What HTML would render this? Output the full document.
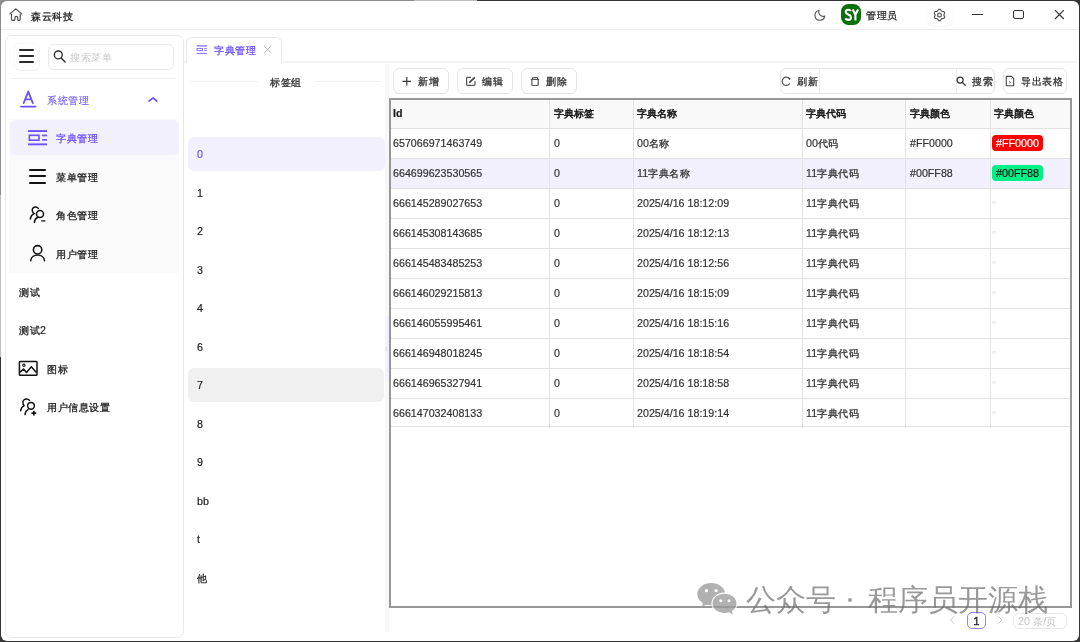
<!DOCTYPE html><html><head><meta charset="utf-8"><style>
*{box-sizing:border-box;margin:0;padding:0}
html,body{width:1080px;height:642px;overflow:hidden}
body{position:relative;background:#3a3a3a;font-family:"Liberation Sans",sans-serif;font-size:10.5px;color:#333}
.frame{position:absolute;left:0;top:0;width:1080px;height:642px;background:#363636}
.win{position:absolute;left:1px;top:1px;width:1078px;height:640px;background:#fff;border-radius:6px;overflow:hidden}
.a{position:absolute}
.t{position:absolute;white-space:nowrap;line-height:14px;height:14px;will-change:transform;-webkit-text-stroke:0.2px currentColor}
svg{position:absolute;overflow:visible}
.bd{position:absolute;border:1px solid #e6e6e6;border-radius:5px;background:#fff}
</style></head><body>
<div class="frame"></div>
<div class="a" style="left:0px;top:0px;width:414px;height:8px;background:#8c8c8c"></div>
<div class="a" style="left:414px;top:0px;width:63px;height:8px;background:#bdbdbd"></div>
<div class="a" style="left:0px;top:0px;width:8px;height:195px;background:#8c8c8c"></div>
<div class="a" style="left:0px;top:195px;width:8px;height:162px;background:#bdbdbd"></div>
<div class="win">
<svg style="left:-1px;top:-1px" width="40" height="30" viewBox="0 0 40 30"><g fill="none" stroke="#4a4a4a" stroke-width="1.15" stroke-linecap="round" stroke-linejoin="round"><path d="M9.8 13.9 L15.8 8.9 L21.8 13.9"/><path d="M11.5 14 V19.3 Q11.5 20.4 12.6 20.4 H13.9 Q14.9 20.4 14.9 19.4 V17.7 Q14.9 16.3 16.3 16.3 Q17.7 16.3 17.7 17.7 V19.4 Q17.7 20.4 18.7 20.4 H19.2 Q20.2 20.4 20.2 19.3 V14"/></g></svg>
<div class="t" style="left:30px;top:8px;font-size:10.7px;color:#222;"><span style="font-size:10.3px;letter-spacing:0.5px;-webkit-text-stroke-width:0.3px">森云科技</span></div>
<div class="a" style="left:0px;top:28px;width:1077px;height:1px;background:#eeeeee"></div>
<svg style="left:-1px;top:-1px" width="900" height="30" viewBox="0 0 900 30"><path d="M818.92 10.50 A4.9 4.9 0 1 0 824.73 16.13 A4.5 4.5 0 0 1 818.92 10.50 Z" fill="none" stroke="#555" stroke-width="1.15" stroke-linejoin="round"/></svg>
<div class="a" style="left:840px;top:3.3px;width:20.200000000000045px;height:20.4px;background:#0a6e0a;border-radius:7.5px"></div>
<svg style="left:-1px;top:-1px" width="900" height="30" viewBox="0 0 900 30"><g fill="none" stroke="#fff" stroke-width="2.1"><path d="M850.9 11 C850.3 10.1 849.4 9.7 848.3 9.7 C846.7 9.7 845.8 10.6 845.8 11.9 C845.8 13.3 846.9 13.9 848.3 14.5 C849.9 15.1 851 15.8 851 17.4 C851 19 849.8 19.9 848.2 19.9 C846.9 19.9 846 19.4 845.3 18.5"/><path d="M852.7 9.4 L855.4 14.6 L858.1 9.4 M855.4 14.4 V20.6"/></g></svg>
<div class="t" style="left:865px;top:7px;font-size:10.7px;color:#333;"><span style="font-size:10.3px;letter-spacing:0.5px;-webkit-text-stroke-width:0.3px">管理员</span></div>
<div class="a" style="left:925px;top:2px;width:28px;height:24px;border:1px solid #fcfcfc;border-bottom-color:#f2f2f2;border-radius:8px"></div>
<svg style="left:-1px;top:-1px" width="1000" height="30" viewBox="0 0 1000 30"><g fill="none" stroke="#555" stroke-width="1.2" stroke-linejoin="round"><path d="M938.62 9.47 L940.38 9.47 L941.65 11.28 L943.85 11.48 L944.73 12.99 L943.80 15.00 L944.73 17.01 L943.85 18.52 L941.65 18.72 L940.38 20.53 L938.62 20.53 L937.35 18.72 L935.15 18.52 L934.27 17.01 L935.20 15.00 L934.27 12.99 L935.15 11.48 L937.35 11.28 Z"/><circle cx="939.5" cy="15" r="1.9"/></g></svg>
<div class="a" style="left:971px;top:12.7px;width:11px;height:1.5px;background:#333"></div>
<div class="a" style="left:1012px;top:9px;width:11px;height:9px;border:1.3px solid #333;border-radius:2px"></div>
<svg style="left:1049px;top:4px" width="20" height="20" viewBox="0 0 20 20"><path d="M5 5.2 L13.8 14 M13.8 5.2 L5 14" stroke="#333" stroke-width="1.2"/></svg>
<div class="a" style="left:4px;top:34px;width:179px;height:603px;border:1px solid #e8e8e8;border-radius:7px;background:#fff"></div>
<div class="a" style="left:13px;top:42px;width:26px;height:28px;border:1px solid #f8f8f8;border-bottom-color:#f0f0f0;border-radius:6px"></div>
<div class="a" style="left:18px;top:48.3px;width:15px;height:1.4000000000000057px;background:#2a2a2a;border-radius:1px"></div>
<div class="a" style="left:18px;top:54.3px;width:15px;height:1.4000000000000057px;background:#2a2a2a;border-radius:1px"></div>
<div class="a" style="left:18px;top:60.3px;width:15px;height:1.4000000000000057px;background:#2a2a2a;border-radius:1px"></div>
<div class="a" style="left:47px;top:43px;width:126px;height:26px;border:1px solid #e8e8e8;border-radius:6px"></div>
<svg style="left:49px;top:46px" width="20" height="18" viewBox="0 0 20 18"><circle cx="8.3" cy="7.9" r="3.95" fill="none" stroke="#333" stroke-width="1.4"/><path d="M11.2 10.9 L15.1 14.9" stroke="#333" stroke-width="1.5" stroke-linecap="round"/></svg>
<div class="t" style="left:69px;top:49px;font-size:10.7px;color:#c8c8c8;-webkit-text-stroke:0"><span style="font-size:10.3px;letter-spacing:0.5px">搜索菜单</span></div>
<div class="a" style="left:11px;top:77px;width:164px;height:1px;background:#f0f0f0"></div>
<svg style="left:17px;top:87px" width="22" height="22" viewBox="0 0 22 22"><path d="M5.7 15 L10.25 3.6 L14.8 15 M7.6 11.4 H12.9" fill="none" stroke="#6f51ff" stroke-width="1.9" stroke-linecap="round" stroke-linejoin="round"/><path d="M3 18.6 H17.6" stroke="#6f51ff" stroke-width="1.8" stroke-linecap="round"/></svg>
<div class="t" style="left:46px;top:92px;font-size:10.7px;color:#7256ff;-webkit-text-stroke:0.1px"><span style="font-size:10.3px;letter-spacing:0.5px">系统管理</span></div>
<svg style="left:145px;top:91px" width="14" height="12" viewBox="0 0 14 12"><path d="M3.1 9 L7 5.8 L10.8 9" fill="none" stroke="#6f51ff" stroke-width="1.7" stroke-linecap="round" stroke-linejoin="round"/></svg>
<div class="a" style="left:8px;top:118px;width:170px;height:153.5px;background:#fafafa;border-radius:2px"></div>
<div class="a" style="left:9px;top:119px;width:169px;height:35px;background:#f3f0fe;border-radius:6px"></div>
<svg style="left:25px;top:127px" width="24" height="20" viewBox="0 0 24 20"><g fill="#6f51ff"><rect x="2" y="2.1" width="19" height="1.9"/><rect x="2" y="15.4" width="19" height="1.9"/><rect x="16.1" y="6.6" width="4.9" height="1.7"/><rect x="16.1" y="11" width="4.9" height="1.7"/></g><rect x="3.4" y="7.3" width="9.6" height="4.9" fill="none" stroke="#6f51ff" stroke-width="1.6"/></svg>
<div class="t" style="left:55px;top:130px;font-size:10.7px;color:#6f51ff;"><span style="font-size:10.3px;letter-spacing:0.5px;-webkit-text-stroke-width:0.3px">字典管理</span></div>
<div class="a" style="left:28px;top:168px;width:17px;height:2px;background:#111;border-radius:1px"></div>
<div class="a" style="left:28px;top:174.3px;width:17px;height:2.0px;background:#111;border-radius:1px"></div>
<div class="a" style="left:28px;top:180.8px;width:17px;height:2.0px;background:#111;border-radius:1px"></div>
<div class="t" style="left:55px;top:169px;font-size:10.7px;color:#222;"><span style="font-size:10.3px;letter-spacing:0.5px;-webkit-text-stroke-width:0.3px">菜单管理</span></div>
<svg style="left:25px;top:201px" width="24" height="24" viewBox="0 0 24 24"><g fill="none" stroke="#111" stroke-width="1.5" stroke-linecap="round"><path d="M12.3 6.4 C11.6 5.3 10.5 4.9 9.4 4.9 C7.4 4.9 6.2 6.5 6.2 8.3 C6.2 9.6 6.9 10.8 8.1 11.6 C5.8 12.6 4.6 14.6 4.3 17"/><circle cx="14" cy="12" r="3.5"/><path d="M11.6 15.5 C9.6 16.3 8.6 18.2 8.4 20.4"/><path d="M15.2 18.9 H19.4" stroke-width="1.4" stroke-linecap="butt"/></g></svg>
<div class="t" style="left:55px;top:207px;font-size:10.7px;color:#222;"><span style="font-size:10.3px;letter-spacing:0.5px;-webkit-text-stroke-width:0.3px">角色管理</span></div>
<svg style="left:25px;top:240px" width="24" height="24" viewBox="0 0 24 24"><g fill="none" stroke="#111" stroke-width="1.55" stroke-linecap="round"><circle cx="11.6" cy="8.8" r="4.2"/><path d="M4.7 19.8 C5 16.3 8 14 11.6 14 C15.2 14 18.2 16.3 18.5 19.8"/></g></svg>
<div class="t" style="left:55px;top:246px;font-size:10.7px;color:#222;"><span style="font-size:10.3px;letter-spacing:0.5px;-webkit-text-stroke-width:0.3px">用户管理</span></div>
<div class="t" style="left:18px;top:284px;font-size:10.7px;color:#222;"><span style="font-size:10.3px;letter-spacing:0.5px;-webkit-text-stroke-width:0.3px">测试</span></div>
<div class="t" style="left:18px;top:322px;font-size:10.7px;color:#222;"><span style="font-size:10.3px;letter-spacing:0.5px;-webkit-text-stroke-width:0.3px">测试</span>2</div>
<svg style="left:15px;top:355px" width="24" height="24" viewBox="0 0 24 24"><g fill="none" stroke="#111" stroke-width="1.5" stroke-linejoin="round"><rect x="3.4" y="5.4" width="17.6" height="13.9" rx="0.9"/><path d="M4.1 16.1 L7.5 13.1 L10.5 16.4 L15.3 10.8 L20.4 16.4"/><circle cx="7.9" cy="9.3" r="1.15" stroke-width="1.1"/></g></svg>
<div class="t" style="left:46px;top:361px;font-size:10.7px;color:#222;"><span style="font-size:10.3px;letter-spacing:0.5px;-webkit-text-stroke-width:0.3px">图标</span></div>
<svg style="left:15px;top:394px" width="24" height="24" viewBox="0 0 24 24"><g fill="none" stroke="#111" stroke-width="1.5" stroke-linecap="round"><path d="M13.5 5.4 C12.8 4.5 11.7 4.1 10.5 4.1 C8.5 4.1 6.9 5.6 6.9 7.5 C6.9 8.8 7.3 9.9 8.1 10.7 C6 11.8 5 13.6 4.7 15.7"/><circle cx="15" cy="10.8" r="3.4"/><path d="M12 14.6 C10.3 15.4 9.2 17.3 9 19.6"/><path d="M15.5 18.1 H20.3 M17.9 15.7 V20.5" stroke-width="1.7" stroke-linecap="butt"/></g></svg>
<div class="t" style="left:46px;top:399px;font-size:10.7px;color:#222;"><span style="font-size:10.3px;letter-spacing:0.5px;-webkit-text-stroke-width:0.3px">用户信息设置</span></div>
<div class="a" style="left:183px;top:60px;width:893px;height:2px;background:#f2f2f2"></div>
<div class="a" style="left:185px;top:36px;width:96px;height:26px;border:1px solid #e8e8e8;border-bottom:none;border-radius:6px 6px 0 0;background:#fff"></div>
<svg style="left:191px;top:41px" width="20" height="16" viewBox="0 0 20 16"><g fill="#7a62ff" opacity="0.85"><rect x="4.7" y="3.2" width="10.2" height="1.4"/><rect x="4.7" y="10.9" width="10.2" height="1.2"/><rect x="12.2" y="6" width="2.7" height="1.1"/><rect x="12.2" y="8" width="2.7" height="1.1"/></g><rect x="5.1" y="6.5" width="5.4" height="2.1" fill="none" stroke="#7a62ff" stroke-width="1.05" opacity="0.85"/></svg>
<div class="t" style="left:213px;top:42px;font-size:10.7px;color:#6f51ff;"><span style="font-size:10.3px;letter-spacing:0.5px;-webkit-text-stroke-width:0.3px">字典管理</span></div>
<svg style="left:255px;top:39px" width="24" height="20" viewBox="0 0 24 20"><path d="M8.4 6.2 L14.9 12.7 M14.9 6.2 L8.4 12.7" stroke="#b4b4b4" stroke-width="1"/></svg>
<div class="a" style="left:190px;top:80px;width:67px;height:1px;background:#eeeeee"></div>
<div class="a" style="left:313px;top:80px;width:68px;height:1px;background:#eeeeee"></div>
<div class="t" style="left:269px;top:74px;font-size:10.7px;color:#333;"><span style="font-size:10.3px;letter-spacing:0.5px;-webkit-text-stroke-width:0.3px">标签组</span></div>
<div class="a" style="left:187px;top:136px;width:197px;height:34px;background:#f3f0fe;border-radius:6px"></div>
<div class="a" style="left:187px;top:367px;width:196px;height:34px;background:#f0f0f0;border-radius:6px"></div>
<div class="t" style="left:196px;top:146px;font-size:10.7px;color:#6f51ff;">0</div>
<div class="t" style="left:196px;top:185px;font-size:10.7px;color:#222;">1</div>
<div class="t" style="left:196px;top:223px;font-size:10.7px;color:#222;">2</div>
<div class="t" style="left:196px;top:262px;font-size:10.7px;color:#222;">3</div>
<div class="t" style="left:196px;top:300px;font-size:10.7px;color:#222;">4</div>
<div class="t" style="left:196px;top:339px;font-size:10.7px;color:#222;">6</div>
<div class="t" style="left:196px;top:377px;font-size:10.7px;color:#222;">7</div>
<div class="t" style="left:196px;top:416px;font-size:10.7px;color:#222;">8</div>
<div class="t" style="left:196px;top:454px;font-size:10.7px;color:#222;">9</div>
<div class="t" style="left:196px;top:493px;font-size:10.7px;color:#222;">bb</div>
<div class="t" style="left:196px;top:531px;font-size:10.7px;color:#222;">t</div>
<div class="t" style="left:196px;top:570px;font-size:10.7px;color:#222;"><span style="font-size:10.3px;letter-spacing:0.5px;-webkit-text-stroke-width:0.3px">他</span></div>
<div class="a" style="left:384px;top:63px;width:4px;height:568px;background:#f7f7f7"></div>
<div class="a" style="left:383.5px;top:315px;width:4.5px;height:65px;background:#f4f1ff"></div>
<svg style="left:379px;top:339px" width="12" height="14" viewBox="0 0 12 14"><path d="M7.4 6.6 L5.6 8.8 L7.4 11" fill="none" stroke="#d6ccff" stroke-width="1"/></svg>
<div class="a" style="left:392px;top:67px;width:56px;height:26px;border:1px solid #e4e4e4;border-radius:6px;background:#fff"></div>
<svg style="left:396px;top:71px" width="20" height="18" viewBox="0 0 20 18"><path d="M9.8 5 V13.5 M5.5 9.3 H13.9" stroke="#333" stroke-width="1.15"/></svg>
<div class="t" style="left:417px;top:73px;font-size:10.7px;color:#333;"><span style="font-size:10.3px;letter-spacing:0.5px;-webkit-text-stroke-width:0.3px">新增</span></div>
<div class="a" style="left:456px;top:67px;width:56px;height:26px;border:1px solid #e4e4e4;border-radius:6px;background:#fff"></div>
<svg style="left:459px;top:71px" width="20" height="18" viewBox="0 0 20 18"><g fill="none" stroke="#555" stroke-width="1.2" stroke-linecap="round" stroke-linejoin="round"><path d="M10.5 5.3 H7.4 Q6.6 5.3 6.6 6.1 V12.5 Q6.6 13.3 7.4 13.3 H14.2 Q15 13.3 15 12.5 V9.4"/></g><path d="M9.8 10.2 L14.3 5.8" stroke="#444" stroke-width="1.8" stroke-linecap="round"/></svg>
<div class="t" style="left:481px;top:73px;font-size:10.7px;color:#333;"><span style="font-size:10.3px;letter-spacing:0.5px;-webkit-text-stroke-width:0.3px">编辑</span></div>
<div class="a" style="left:520px;top:67px;width:56px;height:26px;border:1px solid #e4e4e4;border-radius:6px;background:#fff"></div>
<svg style="left:524px;top:71px" width="20" height="18" viewBox="0 0 20 18"><g fill="none" stroke="#555" stroke-width="1.2" stroke-linejoin="round" stroke-linecap="round"><path d="M6.2 7.5 H13.8 M7.2 7.3 L7.9 5.6 H12.1 L12.8 7.3"/><path d="M6.9 7.6 V12.6 Q6.9 13.5 7.8 13.5 H12.3 Q13.2 13.5 13.2 12.6 V7.6"/></g></svg>
<div class="t" style="left:545px;top:73px;font-size:10.7px;color:#333;"><span style="font-size:10.3px;letter-spacing:0.5px;-webkit-text-stroke-width:0.3px">删除</span></div>
<div class="a" style="left:779px;top:67px;width:215px;height:26px;border:1px solid #e4e4e4;border-radius:6px;background:#fff"></div>
<div class="a" style="left:818px;top:68px;width:1px;height:24px;background:#ececec"></div>
<div class="a" style="left:955px;top:68px;width:1px;height:24px;background:#ececec"></div>
<svg style="left:777px;top:71px" width="20" height="18" viewBox="0 0 20 18"><path d="M11.53 6.78 A4.1 4.1 0 1 0 11.62 11.71" fill="none" stroke="#555" stroke-width="1.2" stroke-linecap="round"/><circle cx="11.53" cy="6.78" r="0.95" fill="#444"/></svg>
<div class="t" style="left:796px;top:73px;font-size:10.7px;color:#333;"><span style="font-size:10.3px;letter-spacing:0.5px;-webkit-text-stroke-width:0.3px">刷新</span></div>
<svg style="left:951px;top:71px" width="20" height="18" viewBox="0 0 20 18"><circle cx="8.1" cy="8.1" r="3.05" fill="none" stroke="#333" stroke-width="1.2"/><path d="M10.4 10.5 L13.3 13.3" stroke="#444" stroke-width="1.3" stroke-linecap="round"/></svg>
<div class="t" style="left:971px;top:73px;font-size:10.7px;color:#333;"><span style="font-size:10.3px;letter-spacing:0.5px;-webkit-text-stroke-width:0.3px">搜索</span></div>
<div class="a" style="left:1002px;top:67px;width:64px;height:26px;border:1px solid #e4e4e4;border-radius:6px;background:#fff"></div>
<svg style="left:1000px;top:71px" width="20" height="18" viewBox="0 0 20 18"><g fill="none" stroke="#444" stroke-width="1.1" stroke-linejoin="round"><path d="M5.3 4.4 H10.5 L12.7 6.7 V13.7 H5.3 Z"/></g><path d="M8.3 9.2 L9.4 10.2 L8.4 11.3" fill="none" stroke="#555" stroke-width="1"/><circle cx="10.3" cy="6.6" r="0.6" fill="#999"/></svg>
<div class="t" style="left:1020px;top:73px;font-size:10.7px;color:#333;"><span style="font-size:10.3px;letter-spacing:0.5px;-webkit-text-stroke-width:0.3px">导出表格</span></div>
<div class="a" style="left:388px;top:97px;width:683px;height:510px;border:2px solid #979797;background:#fff"></div>
<div class="a" style="left:390px;top:99px;width:679px;height:28px;background:#f9f9f9"></div>
<div class="a" style="left:390px;top:158px;width:679px;height:29px;background:#f3f0fe"></div>
<div class="a" style="left:390px;top:127px;width:679px;height:1px;background:#e2e2e2"></div>
<div class="a" style="left:390px;top:157px;width:679px;height:1px;background:#e2e2e2"></div>
<div class="a" style="left:390px;top:187px;width:679px;height:1px;background:#e2e2e2"></div>
<div class="a" style="left:390px;top:217px;width:679px;height:1px;background:#e2e2e2"></div>
<div class="a" style="left:390px;top:247px;width:679px;height:1px;background:#e2e2e2"></div>
<div class="a" style="left:390px;top:277px;width:679px;height:1px;background:#e2e2e2"></div>
<div class="a" style="left:390px;top:307px;width:679px;height:1px;background:#e2e2e2"></div>
<div class="a" style="left:390px;top:337px;width:679px;height:1px;background:#e2e2e2"></div>
<div class="a" style="left:390px;top:367px;width:679px;height:1px;background:#e2e2e2"></div>
<div class="a" style="left:390px;top:397px;width:679px;height:1px;background:#e2e2e2"></div>
<div class="a" style="left:390px;top:425px;width:679px;height:1px;background:#e2e2e2"></div>
<div class="a" style="left:548.0px;top:99px;width:1px;height:328px;background:#e2e2e2"></div>
<div class="a" style="left:631.8px;top:99px;width:1px;height:328px;background:#e2e2e2"></div>
<div class="a" style="left:800.9px;top:99px;width:1px;height:328px;background:#e2e2e2"></div>
<div class="a" style="left:904.0px;top:99px;width:1px;height:328px;background:#e2e2e2"></div>
<div class="a" style="left:988.9px;top:99px;width:1px;height:328px;background:#e2e2e2"></div>
<div class="t" style="left:391.5px;top:105px;font-size:10.7px;color:#1a1a1a;font-weight:bold">Id</div>
<div class="t" style="left:552.5px;top:105px;font-size:10.7px;color:#1a1a1a;-webkit-text-stroke:0.55px #1a1a1a"><span style="font-size:10.3px;letter-spacing:0.0px">字典标签</span></div>
<div class="t" style="left:635.5px;top:105px;font-size:10.7px;color:#1a1a1a;-webkit-text-stroke:0.55px #1a1a1a"><span style="font-size:10.3px;letter-spacing:0.0px">字典名称</span></div>
<div class="t" style="left:804.5px;top:105px;font-size:10.7px;color:#1a1a1a;-webkit-text-stroke:0.55px #1a1a1a"><span style="font-size:10.3px;letter-spacing:0.0px">字典代码</span></div>
<div class="t" style="left:908.5px;top:105px;font-size:10.7px;color:#1a1a1a;-webkit-text-stroke:0.55px #1a1a1a"><span style="font-size:10.3px;letter-spacing:0.0px">字典颜色</span></div>
<div class="t" style="left:992.5px;top:105px;font-size:10.7px;color:#1a1a1a;-webkit-text-stroke:0.55px #1a1a1a"><span style="font-size:10.3px;letter-spacing:0.0px">字典颜色</span></div>
<div class="t" style="left:391.5px;top:135px;font-size:10.7px;color:#333;">657066971463749</div>
<div class="t" style="left:552.5px;top:135px;font-size:10.7px;color:#333;">0</div>
<div class="t" style="left:635.5px;top:135px;font-size:10.7px;color:#333;">00<span style="font-size:10.3px;letter-spacing:0.5px;-webkit-text-stroke-width:0.3px">名称</span></div>
<div class="t" style="left:804.5px;top:135px;font-size:10.7px;color:#333;">00<span style="font-size:10.3px;letter-spacing:0.5px;-webkit-text-stroke-width:0.3px">代码</span></div>
<div class="t" style="left:908.5px;top:135px;font-size:10.7px;color:#333;">#FF0000</div>
<div class="a" style="left:991px;top:134px;width:51px;height:16px;background:#ff0000;border-radius:4px"></div>
<div class="t" style="left:991px;top:135px;font-size:10.7px;color:#fff;width:51px;text-align:center">#FF0000</div>
<div class="t" style="left:391.5px;top:165px;font-size:10.7px;color:#333;">664699623530565</div>
<div class="t" style="left:552.5px;top:165px;font-size:10.7px;color:#333;">0</div>
<div class="t" style="left:635.5px;top:165px;font-size:10.7px;color:#333;">11<span style="font-size:10.3px;letter-spacing:0.5px;-webkit-text-stroke-width:0.3px">字典名称</span></div>
<div class="t" style="left:804.5px;top:165px;font-size:10.7px;color:#333;">11<span style="font-size:10.3px;letter-spacing:0.5px;-webkit-text-stroke-width:0.3px">字典代码</span></div>
<div class="t" style="left:908.5px;top:165px;font-size:10.7px;color:#333;">#00FF88</div>
<div class="a" style="left:991px;top:164px;width:51px;height:16px;background:#00f088;border-radius:4px"></div>
<div class="t" style="left:991px;top:165px;font-size:10.7px;color:#111;width:51px;text-align:center">#00FF88</div>
<div class="t" style="left:391.5px;top:195px;font-size:10.7px;color:#333;">666145289027653</div>
<div class="t" style="left:552.5px;top:195px;font-size:10.7px;color:#333;">0</div>
<div class="t" style="left:635.5px;top:195px;font-size:10.7px;color:#333;">2025/4/16 18:12:09</div>
<div class="t" style="left:804.5px;top:195px;font-size:10.7px;color:#333;">11<span style="font-size:10.3px;letter-spacing:0.5px;-webkit-text-stroke-width:0.3px">字典代码</span></div>
<div class="t" style="left:908.5px;top:195px;font-size:10.7px;color:#333;"></div>
<div class="a" style="left:991px;top:200px;width:4px;height:3px;border:1px solid #e6e6e6;border-radius:2px"></div>
<div class="t" style="left:391.5px;top:225px;font-size:10.7px;color:#333;">666145308143685</div>
<div class="t" style="left:552.5px;top:225px;font-size:10.7px;color:#333;">0</div>
<div class="t" style="left:635.5px;top:225px;font-size:10.7px;color:#333;">2025/4/16 18:12:13</div>
<div class="t" style="left:804.5px;top:225px;font-size:10.7px;color:#333;">11<span style="font-size:10.3px;letter-spacing:0.5px;-webkit-text-stroke-width:0.3px">字典代码</span></div>
<div class="t" style="left:908.5px;top:225px;font-size:10.7px;color:#333;"></div>
<div class="a" style="left:991px;top:230px;width:4px;height:3px;border:1px solid #e6e6e6;border-radius:2px"></div>
<div class="t" style="left:391.5px;top:255px;font-size:10.7px;color:#333;">666145483485253</div>
<div class="t" style="left:552.5px;top:255px;font-size:10.7px;color:#333;">0</div>
<div class="t" style="left:635.5px;top:255px;font-size:10.7px;color:#333;">2025/4/16 18:12:56</div>
<div class="t" style="left:804.5px;top:255px;font-size:10.7px;color:#333;">11<span style="font-size:10.3px;letter-spacing:0.5px;-webkit-text-stroke-width:0.3px">字典代码</span></div>
<div class="t" style="left:908.5px;top:255px;font-size:10.7px;color:#333;"></div>
<div class="a" style="left:991px;top:260px;width:4px;height:3px;border:1px solid #e6e6e6;border-radius:2px"></div>
<div class="t" style="left:391.5px;top:285px;font-size:10.7px;color:#333;">666146029215813</div>
<div class="t" style="left:552.5px;top:285px;font-size:10.7px;color:#333;">0</div>
<div class="t" style="left:635.5px;top:285px;font-size:10.7px;color:#333;">2025/4/16 18:15:09</div>
<div class="t" style="left:804.5px;top:285px;font-size:10.7px;color:#333;">11<span style="font-size:10.3px;letter-spacing:0.5px;-webkit-text-stroke-width:0.3px">字典代码</span></div>
<div class="t" style="left:908.5px;top:285px;font-size:10.7px;color:#333;"></div>
<div class="a" style="left:991px;top:290px;width:4px;height:3px;border:1px solid #e6e6e6;border-radius:2px"></div>
<div class="t" style="left:391.5px;top:315px;font-size:10.7px;color:#333;">666146055995461</div>
<div class="t" style="left:552.5px;top:315px;font-size:10.7px;color:#333;">0</div>
<div class="t" style="left:635.5px;top:315px;font-size:10.7px;color:#333;">2025/4/16 18:15:16</div>
<div class="t" style="left:804.5px;top:315px;font-size:10.7px;color:#333;">11<span style="font-size:10.3px;letter-spacing:0.5px;-webkit-text-stroke-width:0.3px">字典代码</span></div>
<div class="t" style="left:908.5px;top:315px;font-size:10.7px;color:#333;"></div>
<div class="a" style="left:991px;top:320px;width:4px;height:3px;border:1px solid #e6e6e6;border-radius:2px"></div>
<div class="t" style="left:391.5px;top:345px;font-size:10.7px;color:#333;">666146948018245</div>
<div class="t" style="left:552.5px;top:345px;font-size:10.7px;color:#333;">0</div>
<div class="t" style="left:635.5px;top:345px;font-size:10.7px;color:#333;">2025/4/16 18:18:54</div>
<div class="t" style="left:804.5px;top:345px;font-size:10.7px;color:#333;">11<span style="font-size:10.3px;letter-spacing:0.5px;-webkit-text-stroke-width:0.3px">字典代码</span></div>
<div class="t" style="left:908.5px;top:345px;font-size:10.7px;color:#333;"></div>
<div class="a" style="left:991px;top:350px;width:4px;height:3px;border:1px solid #e6e6e6;border-radius:2px"></div>
<div class="t" style="left:391.5px;top:375px;font-size:10.7px;color:#333;">666146965327941</div>
<div class="t" style="left:552.5px;top:375px;font-size:10.7px;color:#333;">0</div>
<div class="t" style="left:635.5px;top:375px;font-size:10.7px;color:#333;">2025/4/16 18:18:58</div>
<div class="t" style="left:804.5px;top:375px;font-size:10.7px;color:#333;">11<span style="font-size:10.3px;letter-spacing:0.5px;-webkit-text-stroke-width:0.3px">字典代码</span></div>
<div class="t" style="left:908.5px;top:375px;font-size:10.7px;color:#333;"></div>
<div class="a" style="left:991px;top:380px;width:4px;height:3px;border:1px solid #e6e6e6;border-radius:2px"></div>
<div class="t" style="left:391.5px;top:405px;font-size:10.7px;color:#333;">666147032408133</div>
<div class="t" style="left:552.5px;top:405px;font-size:10.7px;color:#333;">0</div>
<div class="t" style="left:635.5px;top:405px;font-size:10.7px;color:#333;">2025/4/16 18:19:14</div>
<div class="t" style="left:804.5px;top:405px;font-size:10.7px;color:#333;">11<span style="font-size:10.3px;letter-spacing:0.5px;-webkit-text-stroke-width:0.3px">字典代码</span></div>
<div class="t" style="left:908.5px;top:405px;font-size:10.7px;color:#333;"></div>
<div class="a" style="left:991px;top:410px;width:4px;height:3px;border:1px solid #e6e6e6;border-radius:2px"></div>
<svg style="left:945px;top:612px" width="12" height="14" viewBox="0 0 12 14"><path d="M8 3.4 L4.6 7 L8 10.6" fill="none" stroke="#c8c8c8" stroke-width="1"/></svg>
<div class="a" style="left:966px;top:611px;width:19px;height:17px;border:1.2px solid #9482ff;border-radius:5px"></div>
<div class="t" style="left:966px;top:612.5px;font-size:10.7px;color:#333;width:19px;text-align:center;-webkit-text-stroke:0.45px #333">1</div>
<svg style="left:993px;top:612px" width="12" height="14" viewBox="0 0 12 14"><path d="M4.4 3.4 L7.8 7 L4.4 10.6" fill="none" stroke="#c8c8c8" stroke-width="1"/></svg>
<div class="a" style="left:1012px;top:612px;width:54px;height:16px;border:1px solid #e8e8e8;border-radius:6px"></div>
<div class="t" style="left:1017px;top:613px;font-size:10.7px;color:#c4c4c4;-webkit-text-stroke:0">20 <span style="font-size:10.3px;letter-spacing:0.5px">条</span>/<span style="font-size:10.3px;letter-spacing:0.5px">页</span></div>
<svg style="left:691px;top:575px;opacity:0.78" width="52" height="44" viewBox="0 0 52 44"><g fill="#9c9c9c"><ellipse cx="19.2" cy="18.1" rx="13.9" ry="11.1"/><path d="M11 25 L10.2 30.6 L17 27.8 Z"/></g><g fill="#fff"><circle cx="14.5" cy="14.7" r="1.6"/><circle cx="24.1" cy="14.7" r="1.6"/></g><ellipse cx="32.5" cy="27.4" rx="12.5" ry="10.3" fill="#9c9c9c" stroke="#fff" stroke-width="1.1"/><path d="M36.5 35.5 L40.6 38.9 L39.8 34 Z" fill="#9c9c9c"/><g fill="#fff"><circle cx="28.8" cy="24.7" r="1.5"/><circle cx="37" cy="24.7" r="1.5"/></g></svg>
<div style="position:absolute;will-change:transform;white-space:nowrap;height:36px;line-height:36px;font-size:29.5px;color:rgba(110,110,110,0.7);font-weight:350;left:745px;top:581px">公众号</div>
<div class="a" style="left:847px;top:597px;width:4px;height:4px;border-radius:2px;background:rgba(125,125,125,0.72)"></div>
<div style="position:absolute;will-change:transform;white-space:nowrap;height:36px;line-height:36px;font-size:29.5px;color:rgba(110,110,110,0.7);font-weight:350;left:867px;top:581px">程序员开源栈</div>
</div></body></html>
